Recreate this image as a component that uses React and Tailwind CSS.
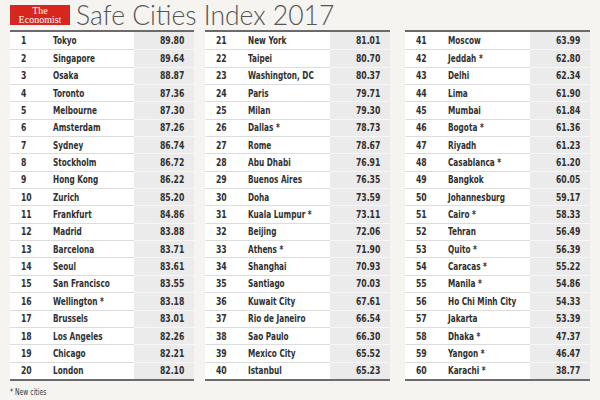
import React from "react";

const columns = [
  [
    [1, "Tokyo", "89.80"], [2, "Singapore", "89.64"], [3, "Osaka", "88.87"], [4, "Toronto", "87.36"],
    [5, "Melbourne", "87.30"], [6, "Amsterdam", "87.26"], [7, "Sydney", "86.74"], [8, "Stockholm", "86.72"],
    [9, "Hong Kong", "86.22"], [10, "Zurich", "85.20"], [11, "Frankfurt", "84.86"], [12, "Madrid", "83.88"],
    [13, "Barcelona", "83.71"], [14, "Seoul", "83.61"], [15, "San Francisco", "83.55"], [16, "Wellington *", "83.18"],
    [17, "Brussels", "83.01"], [18, "Los Angeles", "82.26"], [19, "Chicago", "82.21"], [20, "London", "82.10"],
  ],
  [
    [21, "New York", "81.01"], [22, "Taipei", "80.70"], [23, "Washington, DC", "80.37"], [24, "Paris", "79.71"],
    [25, "Milan", "79.30"], [26, "Dallas *", "78.73"], [27, "Rome", "78.67"], [28, "Abu Dhabi", "76.91"],
    [29, "Buenos Aires", "76.35"], [30, "Doha", "73.59"], [31, "Kuala Lumpur *", "73.11"], [32, "Beijing", "72.06"],
    [33, "Athens *", "71.90"], [34, "Shanghai", "70.93"], [35, "Santiago", "70.03"], [36, "Kuwait City", "67.61"],
    [37, "Rio de Janeiro", "66.54"], [38, "Sao Paulo", "66.30"], [39, "Mexico City", "65.52"], [40, "Istanbul", "65.23"],
  ],
  [
    [41, "Moscow", "63.99"], [42, "Jeddah *", "62.80"], [43, "Delhi", "62.34"], [44, "Lima", "61.90"],
    [45, "Mumbai", "61.84"], [46, "Bogota *", "61.36"], [47, "Riyadh", "61.23"], [48, "Casablanca *", "61.20"],
    [49, "Bangkok", "60.05"], [50, "Johannesburg", "59.17"], [51, "Cairo *", "58.33"], [52, "Tehran", "56.49"],
    [53, "Quito *", "56.39"], [54, "Caracas *", "55.22"], [55, "Manila *", "54.86"], [56, "Ho Chi Minh City", "54.33"],
    [57, "Jakarta", "53.39"], [58, "Dhaka *", "47.37"], [59, "Yangon *", "46.47"], [60, "Karachi *", "38.77"],
  ],
];

const tableFont = { fontFamily: '"DejaVu Sans Condensed", "DejaVu Sans", sans-serif' };

function RankTable({ rows, className }) {
  return (
    <div className={`w-[185px] border-t-2 border-b-2 border-[#6b6b6b] ${className}`}>
      {rows.map(([rank, city, score], i) => (
        <div key={rank} className="flex h-[17.35px] text-[11px] leading-none font-bold text-[#303030] whitespace-nowrap">
          <div className={`flex items-center shrink-0 w-[43px] pl-[11px] bg-white ${i > 0 ? "border-t border-[#dcdcdc]" : ""}`}>
            <span className="inline-block origin-left scale-x-[0.78]">{rank}</span>
          </div>
          <div className={`flex items-center flex-1 min-w-0 bg-white ${i > 0 ? "border-t border-[#dcdcdc]" : ""}`}>
            <span className="inline-block origin-left scale-x-[0.74]">{city}</span>
          </div>
          <div className={`flex items-center justify-end shrink-0 w-[60px] pr-[10px] bg-[#ebebeb] ${i > 0 ? "border-t border-[#f7f7f7]" : ""}`}>
            <span className="inline-block origin-right scale-x-[0.78]">{score}</span>
          </div>
        </div>
      ))}
    </div>
  );
}

export default function App() {
  return (
    <div className="w-[600px] h-[400px] bg-[#f5f4f0] px-[10px] overflow-hidden">
      {/* Header */}
      <div className="flex items-end h-[27px] gap-[6px]">
        <div
          className="w-[60px] h-[20px] mb-[2px] bg-[#d7261e] text-white flex flex-col items-center justify-center leading-[9.5px] text-[10px]"
          style={{ fontFamily: '"Liberation Serif", serif' }}
        >
          <span>The</span>
          <span>Economist</span>
        </div>
        <div
          className="text-[26.5px] leading-none font-light text-[#555] mb-[-1px]"
          style={{ fontFamily: 'Lato, "Open Sans", sans-serif' }}
        >
          Safe Cities Index 2017
        </div>
      </div>

      {/* Tables */}
      <div className="flex mt-[3px]" style={tableFont}>
        <RankTable rows={columns[0]} />
        <RankTable rows={columns[1]} className="ml-[11px]" />
        <RankTable rows={columns[2]} className="ml-[15px]" />
      </div>

      <div className="mt-[6px] text-[8px] text-[#333]" style={tableFont}>
        <span className="inline-block origin-left scale-x-[0.85]">* New cities</span>
      </div>
    </div>
  );
}
